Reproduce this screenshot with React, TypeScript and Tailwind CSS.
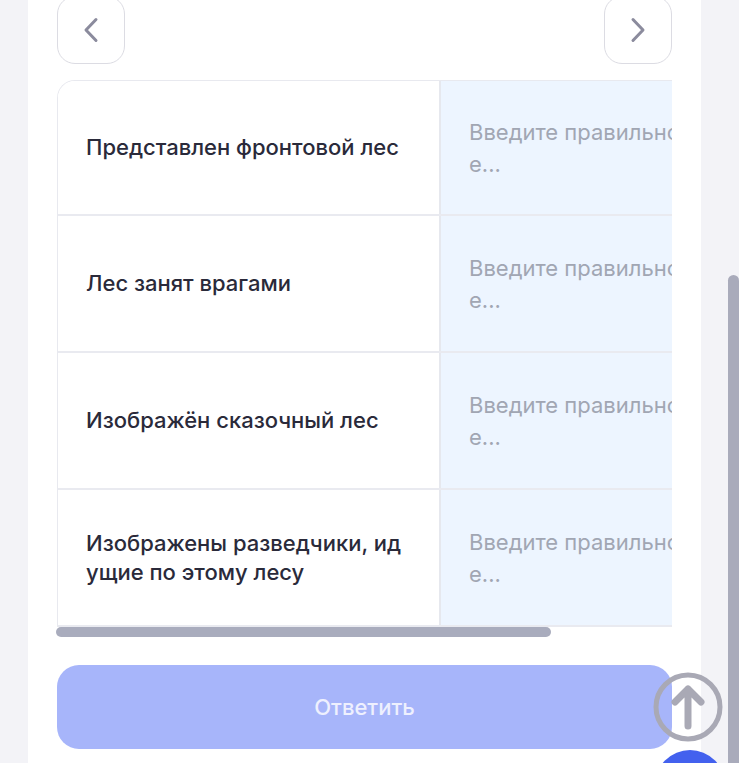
import React from "react";

const rows: { left: React.ReactNode; h: string }[] = [
  { left: "Представлен фронтовой лес", h: "h-[135px]" },
  { left: "Лес занят врагами", h: "h-[137px]" },
  { left: "Изображён сказочный лес", h: "h-[137px]" },
  {
    left: (
      <>
        Изображены разведчики, ид
        <br />
        ущие по этому лесу
      </>
    ),
    h: "h-[137px]",
  },
];

function Chevron({ dir }: { dir: "left" | "right" }) {
  return (
    <svg width="16" height="26" viewBox="0 0 16 26" fill="none">
      <path
        d={dir === "left" ? "M13 2.5 L3 13 L13 23.5" : "M3 2.5 L13 13 L3 23.5"}
        stroke="#8b8b9d"
        strokeWidth="3"
        strokeLinecap="round"
        strokeLinejoin="round"
      />
    </svg>
  );
}

export default function App() {
  return (
    <div
      className="relative flex h-[763px] w-[739px] overflow-hidden bg-[#f3f3f7]"
      style={{ fontFamily: "Inter, 'Noto Sans', sans-serif" }}
    >
      <div className="ml-[28px] flex w-[673px] flex-col bg-white px-[29px]">
        <div className="-mt-[4px] flex justify-between">
          <button className="flex h-[68px] w-[68px] items-center justify-center rounded-[18px] border border-[#dcdce3] bg-white">
            <Chevron dir="left" />
          </button>
          <button className="flex h-[68px] w-[68px] items-center justify-center rounded-[18px] border border-[#dcdce3] bg-white">
            <Chevron dir="right" />
          </button>
        </div>

        <div className="mt-[16px] w-[615px] overflow-hidden rounded-tl-[18px] border-l border-t border-[#e8e9ef]">
          {rows.map((r, i) => (
            <div key={i} className={`flex ${r.h} border-b-2 border-[#e9eaf0]`}>
              <div className="flex w-[381px] shrink-0 items-center bg-white pl-[28px] pr-[12px] text-[22px] font-medium leading-[29px] text-[#2a2a3a]">
                <span className="whitespace-nowrap">{r.left}</span>
              </div>
              <div className="w-[2px] shrink-0 bg-[#e6e8ee]" />
              <div className="flex flex-1 items-center overflow-hidden bg-[#edf5ff] pl-[28px] text-[22px] leading-[32px] text-[#a1a6b3]">
                <div className="whitespace-nowrap">
                  <div>Введите правильно</div>
                  <div>е...</div>
                </div>
              </div>
            </div>
          ))}
        </div>

        <div className="-ml-px h-[10px] w-[495px] rounded-full bg-[#a9acbd]" />

        <button className="mt-[28px] flex h-[84px] w-[615px] items-center justify-center rounded-[22px] bg-[#a7b5fa] text-[22px] font-medium text-[#eef0fe]">
          Ответить
        </button>
      </div>

      <div className="flex flex-1 justify-end">
        <div className="mt-[275px] h-[500px] w-[11px] rounded-t-full bg-[#a9abbb]" />
      </div>

      <div className="absolute left-[653px] top-[672px] h-[70px] w-[70px]">
        <svg width="70" height="70" viewBox="0 0 70 70" fill="none">
          <circle cx="35" cy="35" r="32" stroke="#a9a9b5" strokeWidth="5" />
          <path
            d="M35 54 V17 M22 30 L35 17 L48 30"
            stroke="#a9a9b5"
            strokeWidth="7"
            strokeLinecap="round"
            strokeLinejoin="round"
          />
        </svg>
      </div>

      <div className="absolute left-[655px] top-[750px] h-[70px] w-[70px] rounded-full bg-[#4361ee]" />
    </div>
  );
}
